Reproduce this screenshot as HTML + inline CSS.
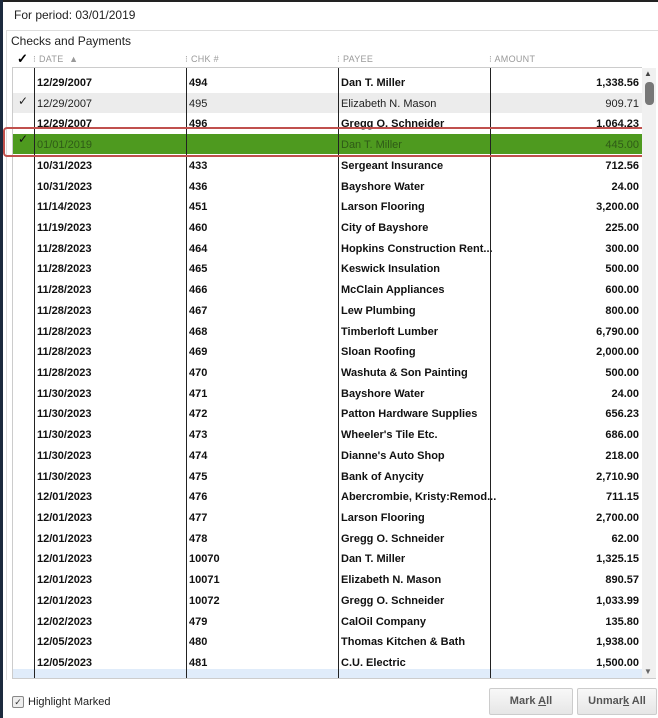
<!DOCTYPE html>
<html><head><style>
body{margin:0;width:658px;height:718px;background:#fff;font-family:"Liberation Sans",Arial,sans-serif;position:relative;overflow:hidden}
.abs{position:absolute}
.row{position:absolute;left:13px;width:629px;height:21px;font-size:11px;font-weight:bold;color:#111}
.row span{position:absolute;top:4px;white-space:nowrap}
.c1{left:24px}.c2{left:176px}.c3{left:328px}.c4{right:3px}
.vl{position:absolute;top:68px;height:610px;width:1px;background:#222}
.hd{position:absolute;top:54px;font-size:9px;color:#999;letter-spacing:.3px}
.btn{position:absolute;top:688px;height:25px;border:1px solid #ccc;border-radius:2px;background:linear-gradient(#f8f8f8,#e6e6e6);font-size:11px;font-weight:bold;color:#555;text-align:center;line-height:25px}
</style></head><body>
<div class="abs" style="left:0;top:0;width:658px;height:2px;background:#222"></div>
<div class="abs" style="left:0;top:0;width:3px;height:718px;background:#1c2a3e"></div>
<div class="abs" style="left:14px;top:8px;font-size:12px;color:#222">For period: 03/01/2019</div>
<div class="abs" style="left:6px;top:30px;width:652px;height:1px;background:#ddd"></div>
<div class="abs" style="left:6px;top:30px;width:1px;height:650px;background:#ddd"></div>
<div class="abs" style="left:11px;top:34px;font-size:12px;color:#222">Checks and Payments</div>
<div class="abs" style="left:17px;top:51px;font-size:13px;font-weight:bold">✓</div>
<div class="hd" style="left:33px">⁝ DATE &nbsp;▲</div>
<div class="hd" style="left:185px">⁝ CHK #</div>
<div class="hd" style="left:337px">⁝ PAYEE</div>
<div class="hd" style="left:489px">⁝ AMOUNT</div>
<div class="abs" style="left:12px;top:67px;width:630px;height:1px;background:#ccc"></div>
<div class="abs" style="left:12px;top:68px;width:1px;height:611px;background:#ccc"></div>
<div class="abs" style="left:12px;top:678px;width:644px;height:1px;background:#ccc"></div>
<div class="abs" style="left:13px;top:93px;width:629px;height:20px;background:#ececec"></div>
<div class="abs" style="left:13px;top:134px;width:629px;height:20px;background:#4e9a1f"></div>
<div class="abs" style="left:13px;top:669px;width:629px;height:9px;background:#e0ecfa"></div>
<div id="rows"></div>
<div class="vl" style="left:34px"></div><div class="vl" style="left:186px"></div><div class="vl" style="left:338px"></div><div class="vl" style="left:490px"></div>
<div class="abs" style="left:3px;top:127px;width:643px;height:26px;border:2px solid #c0504d;border-radius:4px"></div>
<div class="abs" style="left:642px;top:68px;width:14px;height:610px;background:#f0f0f0"></div>
<div class="abs" style="left:644px;top:69px;font-size:8px;color:#444">▲</div>
<div class="abs" style="left:645px;top:82px;width:9px;height:23px;border-radius:4px;background:#777"></div>
<div class="abs" style="left:644px;top:667px;font-size:8px;color:#666">▼</div>
<div class="abs" style="left:12px;top:696px;width:10px;height:10px;border:1px solid #888;border-radius:2px;background:#eee;font-size:9px;line-height:10px;text-align:center;color:#333">✓</div>
<div class="abs" style="left:28px;top:696px;font-size:11px;color:#222">Highlight Marked</div>
<div class="btn" style="left:489px;width:82px">Mark <u>A</u>ll</div>
<div class="btn" style="left:577px;width:78px">Unmar<u>k</u> All</div>
<script>
var d=[["12/29/2007","494","Dan T. Miller","1,338.56"],["12/29/2007","495","Elizabeth N. Mason","909.71"],["12/29/2007","496","Gregg O. Schneider","1,064.23"],["01/01/2019","","Dan T. Miller","445.00"],["10/31/2023","433","Sergeant Insurance","712.56"],["10/31/2023","436","Bayshore Water","24.00"],["11/14/2023","451","Larson Flooring","3,200.00"],["11/19/2023","460","City of Bayshore","225.00"],["11/28/2023","464","Hopkins Construction Rent...","300.00"],["11/28/2023","465","Keswick Insulation","500.00"],["11/28/2023","466","McClain Appliances","600.00"],["11/28/2023","467","Lew Plumbing","800.00"],["11/28/2023","468","Timberloft Lumber","6,790.00"],["11/28/2023","469","Sloan Roofing","2,000.00"],["11/28/2023","470","Washuta & Son Painting","500.00"],["11/30/2023","471","Bayshore Water","24.00"],["11/30/2023","472","Patton Hardware Supplies","656.23"],["11/30/2023","473","Wheeler's Tile Etc.","686.00"],["11/30/2023","474","Dianne's Auto Shop","218.00"],["11/30/2023","475","Bank of Anycity","2,710.90"],["12/01/2023","476","Abercrombie, Kristy:Remod...","711.15"],["12/01/2023","477","Larson Flooring","2,700.00"],["12/01/2023","478","Gregg O. Schneider","62.00"],["12/01/2023","10070","Dan T. Miller","1,325.15"],["12/01/2023","10071","Elizabeth N. Mason","890.57"],["12/01/2023","10072","Gregg O. Schneider","1,033.99"],["12/02/2023","479","CalOil Company","135.80"],["12/05/2023","480","Thomas Kitchen & Bath","1,938.00"],["12/05/2023","481","C.U. Electric","1,500.00"]];
var h="";d.forEach(function(r,i){var y=72+i*20.71;var st="";var ck="";
if(i==1){st="font-weight:normal;color:#222";ck='<span style="left:5px;top:0px;font-size:12px">✓</span>';}
if(i==3){st="font-weight:normal;color:#2f5a17";ck='<span style="left:5px;top:-3px;font-size:12px;color:#111">✓</span>';}
h+='<div class="row" style="top:'+(y+1).toFixed(1)+'px;'+st+'">'+ck+'<span class="c1">'+r[0]+'</span><span class="c2">'+r[1]+'</span><span class="c3">'+r[2]+'</span><span class="c4">'+r[3]+'</span></div>';});
document.getElementById("rows").innerHTML=h;
</script>
</body></html>
